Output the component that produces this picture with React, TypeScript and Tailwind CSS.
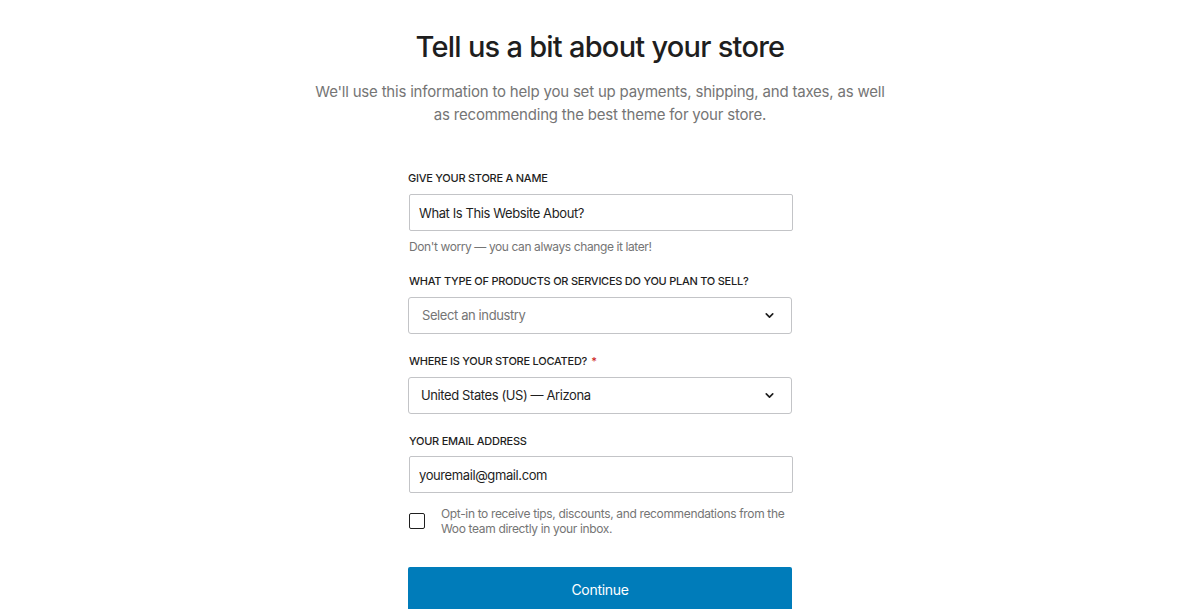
import { ChevronDown } from "lucide-react"

const font = { fontFamily: "Inter, 'Noto Sans', sans-serif" }

function Label({ children, required }: { children: React.ReactNode; required?: boolean }) {
  return (
    <label className="block text-[11px] leading-4 font-medium uppercase tracking-[-0.25px] text-[#1e1e1e]">
      {children}
      {required && <span className="ml-1 text-[#cc1818]">*</span>}
    </label>
  )
}

export default function App() {
  return (
    <div className="min-h-[609px] w-full bg-white text-[#1e1e1e]" style={font}>
      <div className="flex flex-col items-center pt-[27px]">
        <h1 className="text-[29px] leading-10 font-medium tracking-[-0.75px] text-[#1e1e1e]">
          Tell us a bit about your store
        </h1>
        <p className="mt-[13px] w-[580px] text-center text-[15px] leading-[23px] tracking-[-0.2px] text-[#757575]">
          We'll use this information to help you set up payments, shipping, and taxes, as well
          as recommending the best theme for your store.
        </p>

        <form className="mt-[44px] w-[384px]">
          <Label>Give your store a name</Label>
          <input
            type="text"
            defaultValue="What Is This Website About?"
            className="mt-2 ml-px block h-[37px] w-full rounded-[2px] border border-[#c3c4c7] px-[9px] text-[13px] tracking-[-0.4px] text-[#1e1e1e] outline-none"
          />
          <p className="mt-2 ml-px text-[12px] leading-4 tracking-[-0.4px] text-[#757575]">
            Don't worry — you can always change it later!
          </p>

          <div className="mt-[18px] ml-px">
            <Label>What type of products or services do you plan to sell?</Label>
          </div>
          <button
            type="button"
            className="mt-2 flex h-[37px] w-full items-center justify-between rounded-[3px] border border-[#c3c4c7] pl-[13px] pr-[15px] text-[13px] tracking-[-0.4px] text-[#757575]"
          >
            <span>Select an industry</span>
            <ChevronDown className="h-[13px] w-[13px] text-[#1e1e1e]" strokeWidth={3} />
          </button>

          <div className="mt-[19px] ml-px">
            <Label required>Where is your store located?</Label>
          </div>
          <button
            type="button"
            className="mt-2 flex h-[37px] w-full items-center justify-between rounded-[3px] border border-[#c3c4c7] pl-[12px] pr-[15px] text-[13px] tracking-[-0.4px] text-[#1e1e1e]"
          >
            <span>United States (US) — Arizona</span>
            <ChevronDown className="h-[13px] w-[13px] text-[#1e1e1e]" strokeWidth={3} />
          </button>

          <div className="mt-[19px] ml-px">
            <Label>Your email address</Label>
          </div>
          <input
            type="email"
            defaultValue="youremail@gmail.com"
            className="mt-[7px] ml-px block h-[37px] w-full rounded-[2px] border border-[#c3c4c7] px-[9px] text-[13px] tracking-[-0.4px] text-[#1e1e1e] outline-none"
          />

          <label className="mt-[13px] ml-px flex items-start gap-4">
            <span className="mt-[7px] block h-4 w-4 shrink-0 rounded-[2px] border-[1.5px] border-[#1e1e1e]" />
            <span className="text-[12px] leading-[15px] tracking-[-0.35px] text-[#757575]">
              Opt-in to receive tips, discounts, and recommendations from the Woo team directly in your inbox.
            </span>
          </label>

          <button
            type="button"
            className="mt-[31px] block h-[44px] w-full rounded-[2px] bg-[#007cba] text-[14px] tracking-[-0.3px] text-white"
          >
            Continue
          </button>
        </form>
      </div>
    </div>
  )
}
